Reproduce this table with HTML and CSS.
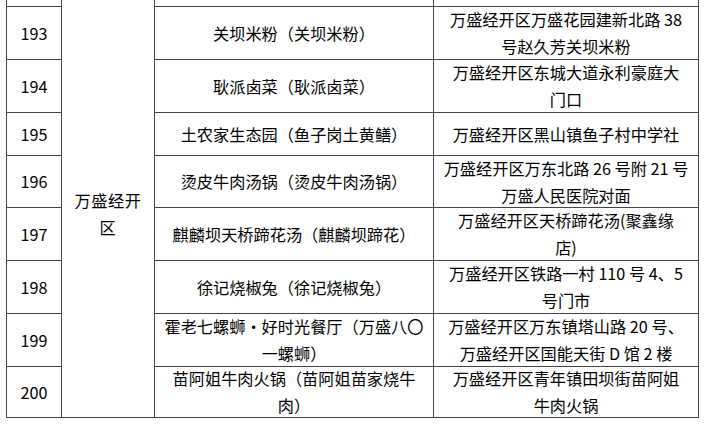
FILE: index.html
```html
<!DOCTYPE html>
<html lang="zh-CN">
<head>
<meta charset="utf-8">
<title>万盛经开区</title>
<link rel="stylesheet" href="styles.css">
</head>
<body>
<div class="sheet">
  <div class="cell top"></div>
  <div class="cell merged"><span>万盛经开<br>区</span></div>
  <div class="cell top"></div>
  <div class="cell top"></div>

  <div class="cell num r1">193</div>
  <div class="cell name r1">关坝米粉（关坝米粉）</div>
  <div class="cell addr r1">万盛经开区万盛花园建新北路 38<br>号赵久芳关坝米粉</div>

  <div class="cell num r2">194</div>
  <div class="cell name r2">耿派卤菜（耿派卤菜）</div>
  <div class="cell addr r2">万盛经开区东城大道永利豪庭大<br>门口</div>

  <div class="cell num r3">195</div>
  <div class="cell name r3">土农家生态园（鱼子岗土黄鳝）</div>
  <div class="cell addr r3">万盛经开区黑山镇鱼子村中学社</div>

  <div class="cell num r4">196</div>
  <div class="cell name r4">烫皮牛肉汤锅（烫皮牛肉汤锅）</div>
  <div class="cell addr r4">万盛经开区万东北路 26 号附 21 号<br>万盛人民医院对面</div>

  <div class="cell num r5">197</div>
  <div class="cell name r5">麒麟坝天桥蹄花汤（麒麟坝蹄花）</div>
  <div class="cell addr r5">万盛经开区天桥蹄花汤(聚鑫缘<br>店)</div>

  <div class="cell num r6">198</div>
  <div class="cell name r6">徐记烧椒兔（徐记烧椒兔）</div>
  <div class="cell addr r6">万盛经开区铁路一村 110 号 4、5<br>号门市</div>

  <div class="cell num r7">199</div>
  <div class="cell name r7">霍老七螺蛳·好时光餐厅（万盛八〇<br>一螺蛳）</div>
  <div class="cell addr r7">万盛经开区万东镇塔山路 20 号、<br>万盛经开区国能天街 D 馆 2 楼</div>

  <div class="cell num r8">200</div>
  <div class="cell name r8">苗阿姐牛肉火锅（苗阿姐苗家烧牛<br>肉）</div>
  <div class="cell addr r8">万盛经开区青年镇田坝街苗阿姐<br>牛肉火锅</div>
</div>
</body>
</html>
```

FILE: styles.css
```css
html, body {
  margin: 0;
  padding: 0;
  background: #ffffff;
}

body {
  font-family: "Noto Sans CJK SC", "Noto Sans", sans-serif;
  font-size: 16.2px;
  color: #000000;
  overflow: hidden;
}

.sheet {
  display: grid;
  grid-template-columns: 55px 93px 279px 265px;
  grid-template-rows: 7px 53px 53px 43px 52px 53px 53px 53px 51px;
  width: 693px;
  margin-left: 6px;
  border-left: 1px solid #444444;
}

.cell {
  box-sizing: border-box;
  border-right: 1px solid #444444;
  border-bottom: 1px solid #444444;
  display: flex;
  align-items: center;
  justify-content: center;
  text-align: center;
  line-height: 27px;
  white-space: nowrap;
}

.merged {
  grid-column: 2;
  grid-row: 1 / -1;
  padding-top: 11px;
  letter-spacing: 0.6px;
}

.num {
  grid-column: 1;
}

.name {
  grid-column: 3;
}

.addr {
  grid-column: 4;
}

.r1 { grid-row: 2; }
.r2 { grid-row: 3; }
.r3 { grid-row: 4; }
.r4 { grid-row: 5; }
.r5 { grid-row: 6; }
.r6 { grid-row: 7; }
.r7 { grid-row: 8; }
.r8 { grid-row: 9; }
```
